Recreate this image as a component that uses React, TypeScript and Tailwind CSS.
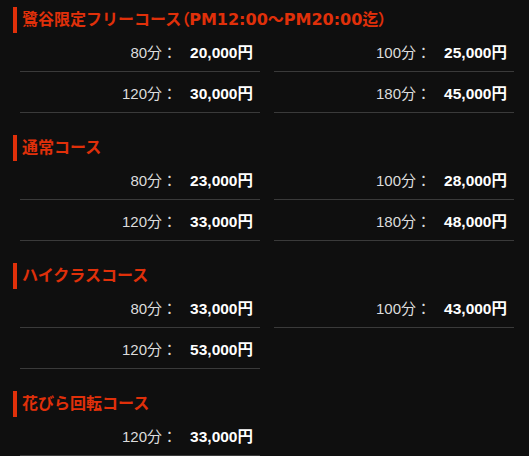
const courses: { title: string; note?: string; items: { time: string; price: string }[] }[] = [
  {
    title: "鷺谷限定フリーコース",
    note: "（PM12:00～PM20:00迄）",
    items: [
      { time: "80分", price: "20,000円" },
      { time: "100分", price: "25,000円" },
      { time: "120分", price: "30,000円" },
      { time: "180分", price: "45,000円" },
    ],
  },
  {
    title: "通常コース",
    items: [
      { time: "80分", price: "23,000円" },
      { time: "100分", price: "28,000円" },
      { time: "120分", price: "33,000円" },
      { time: "180分", price: "48,000円" },
    ],
  },
  {
    title: "ハイクラスコース",
    items: [
      { time: "80分", price: "33,000円" },
      { time: "100分", price: "43,000円" },
      { time: "120分", price: "53,000円" },
    ],
  },
  {
    title: "花びら回転コース",
    items: [{ time: "120分", price: "33,000円" }],
  },
];

export default function App() {
  return (
    <div
      className="min-h-screen bg-[#0f0f0f] pt-[7px]"
      style={{ fontFamily: '"Liberation Sans", "Noto Sans CJK JP", sans-serif' }}
    >
      {courses.map((c) => (
        <section key={c.title} className="mb-[22px]">
          <h2
            className="ml-[13px] -mb-[2px] flex h-[26px] items-center border-l-4 border-[#e0300a] pl-[5px] text-[16px] font-bold leading-none text-[#e0300a]"
            style={{ fontFamily: '"DejaVu Sans", "Noto Sans CJK JP", sans-serif' }}
          >
            {c.title}
            {c.note && <span className="[font-feature-settings:'palt']">{c.note}</span>}
          </h2>
          <div className="ml-[20px] grid w-[494px] grid-cols-2 gap-x-[14px]">
            {c.items.map((it) => (
              <div
                key={it.time}
                className="flex items-center justify-end border-b border-[#3a3a3a] pb-[8px] pr-[7px] pt-[12px] leading-[20px]"
              >
                <span className="text-[15px] text-[#dcdcdc]">{it.time}：</span>
                <span className="ml-[13px] text-[15.5px] font-bold text-white">{it.price}</span>
              </div>
            ))}
          </div>
        </section>
      ))}
    </div>
  );
}
